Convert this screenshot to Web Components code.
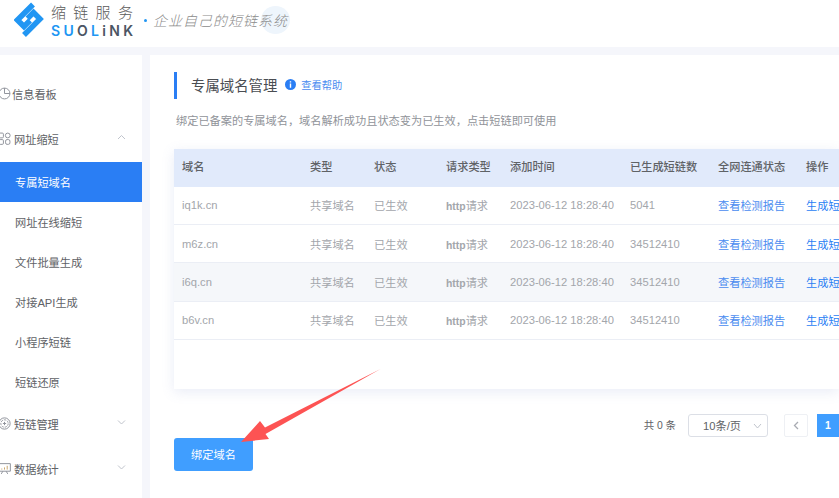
<!DOCTYPE html>
<html lang="zh">
<head>
<meta charset="utf-8">
<title>专属域名管理</title>
<style>
  html, body { margin: 0; padding: 0; }
  body {
    width: 839px; height: 498px; overflow: hidden;
    background: #f5f6fb;
    font-family: "Liberation Sans", "Noto Sans CJK SC", sans-serif;
    font-size: 11.2px;
  }
  #app { display: flex; flex-direction: column; height: 498px; }
  #content { display: flex; flex: 1; gap: 8px; padding-top: 8px; min-height: 0; }
</style>
</head>
<body>
<div id="app">
  <app-header></app-header>
  <div id="content">
    <side-nav>
      <nav-group label="信息看板" icon="clock" style="--tx:-2px"></nav-group>
      <nav-group label="网址缩短" icon="grid" chevron="up"></nav-group>
      <nav-item active>专属短域名</nav-item>
      <nav-item>网址在线缩短</nav-item>
      <nav-item>文件批量生成</nav-item>
      <nav-item>对接API生成</nav-item>
      <nav-item>小程序短链</nav-item>
      <nav-item>短链还原</nav-item>
      <nav-group label="短链管理" icon="badge" chevron="down"></nav-group>
      <nav-group label="数据统计" icon="chart" chevron="down"></nav-group>
    </side-nav>
    <domain-page>
      <domain-table></domain-table>
    </domain-page>
  </div>
</div>

<script>
const icons = {
  clock: '<circle cx="6" cy="6" r="5"/><path d="M6 1v5h5"/>',
  grid: '<rect x="1" y="1" width="4" height="4.4" rx="1"/><circle cx="9" cy="3.2" r="2.2"/><rect x="1" y="7" width="4" height="4.4" rx="1"/><rect x="7" y="7" width="4" height="4.4" rx="1.4"/>',
  badge: '<circle cx="6" cy="6" r="5.2"/><circle cx="6" cy="6" r="3.4" stroke-dasharray="2 1"/><path d="M4.5 6h3M6 4.5v3"/>',
  chart: '<path d="M.6 1.5h10.8v7H.6zM3 11l1.5-2.5M9 11 7.5 8.500"/><path d="M3.500 7V6M6 7V5M8.500 7V3.500" stroke="#c9a66b"/>'
};

class AppHeader extends HTMLElement {
  constructor() {
    super();
    this.attachShadow({ mode: 'open' }).innerHTML = `
      <style>
        :host { display: flex; align-items: center; height: 47px; flex: none; background: #fff; padding-left: 14px; box-sizing: border-box; }
        svg { flex: none; width: 30px; height: 36px; margin-top: -7px; }
        .brand { display: flex; flex-direction: column; margin-left: 7px; margin-top: -7px; width: 86px; }
        .cn { font: 300 15px/17px "Noto Sans CJK SC", sans-serif; letter-spacing: 7.300px; color: #5a5a5a; white-space: nowrap; }
        .en { font: 600 14px/13px Inter, "Liberation Sans", sans-serif; letter-spacing: 3.300px; color: #4b5563; white-space: nowrap; margin-top: 4px; }
        .en b { color: #2196f3; font-weight: 600; }
        .slogan { position: relative; display: flex; align-items: center; margin-left: 7px; margin-top: -7px; white-space: nowrap; }
        .dot { width: 3px; height: 3px; border-radius: 50%; background: #2196f3; margin-right: 6px; }
        .text { font: 300 14px/20px "Noto Sans CJK SC", sans-serif; font-style: italic; letter-spacing: 1px; color: #8b8b8b; position: relative; }
        .halo { position: absolute; left: 117px; top: -4px; width: 29px; height: 28px; border-radius: 50%; background: #eef5fc; }
      </style>
      <svg viewBox="0 0 30 36" fill="none" stroke="#2196f3" stroke-width="5.500">
        <path d="M19 2.500 3.500 18 10 24.500 16 18.500"/>
        <path d="M10 33 26 17 19.500 10.500 13.500 16.500"/>
      </svg>
      <div class="brand">
        <span class="cn">缩链服务</span>
        <span class="en"><b>SU</b>O<b>L</b>iNK</span>
      </div>
      <div class="slogan">
        <span class="dot"></span>
        <span class="halo"></span>
        <span class="text">企业自己的短链系统</span>
      </div>`;
  }
}

class SideNav extends HTMLElement {
  constructor() {
    super();
    this.attachShadow({ mode: 'open' }).innerHTML = `
      <style>
        :host { display: block; flex: none; width: 142px; background: #fff; padding-top: 17px; box-sizing: border-box; }
      </style>
      <slot></slot>`;
  }
}

class NavGroup extends HTMLElement {
  constructor() {
    super();
    const icon = icons[this.getAttribute('icon')] || '';
    const chevron = this.getAttribute('chevron');
    const chevronPath = chevron === 'up' ? 'M1 5 4.500 1.500 8 5' : 'M1 1.500 4.500 5 8 1.500';
    this.attachShadow({ mode: 'open' }).innerHTML = `
      <style>
        :host { display: flex; align-items: center; box-sizing: border-box; height: 45px; padding-bottom: 2px; color: #606266; font-size: 11.200px; position: relative; }
        .ico { width: 13px; height: 13px; margin-left: -2px; flex: none; fill: none; stroke: #8f929a; stroke-width: .9; }
        .label { margin-left: 3px; transform: translateX(var(--tx, 0)); }
        .chev { position: absolute; left: 117px; top: 17px; width: 9px; height: 6px; fill: none; stroke: #c0c4cc; stroke-width: 1; }
      </style>
      <svg class="ico" viewBox="0 0 12 12">${icon}</svg>
      <span class="label">${this.getAttribute('label')}</span>
      ${chevron ? `<svg class="chev" viewBox="0 0 9 6"><path d="${chevronPath}"/></svg>` : ''}`;
  }
}

class NavItem extends HTMLElement {
  constructor() {
    super();
    this.attachShadow({ mode: 'open' }).innerHTML = `
      <style>
        :host { display: flex; align-items: center; box-sizing: border-box; height: 40px; padding: 0 0 1px 15px; color: #606266; font-size: 11.200px; }
        :host([active]) { background: #2a7ef4; color: #fff; }
      </style>
      <slot></slot>`;
  }
}

class DomainPage extends HTMLElement {
  constructor() {
    super();
    this.attachShadow({ mode: 'open' }).innerHTML = `
      <style>
        :host { display: block; flex: 1; min-width: 0; position: relative; background: #fff; padding: 17px 0 0 24px; box-sizing: border-box; overflow: hidden; }
        .title { display: flex; align-items: center; box-sizing: border-box; height: 27px; border-left: 3px solid #2a7ef4; padding: 0 0 3px 14px; }
        h2 { margin: 0; font-size: 14.400px; font-weight: 400; color: #4a4d52; }
        .help { display: flex; align-items: center; gap: 5px; margin-left: 8px; color: #4a8cf0; font-size: 10.240px; }
        .help svg { width: 11px; height: 11px; }
        p { margin: 14px 0 0 2px; height: 17px; line-height: 17px; color: #909399; font-size: 11.200px; }
        .table { margin-top: 19px; }
        .pager { display: flex; align-items: center; justify-content: flex-end; margin-top: 25px; height: 23px; }
        .total { color: #606266; font-size: 10.400px; margin: 0 12px 2px 0; }
        .select { display: flex; align-items: center; box-sizing: border-box; width: 80px; height: 23px; border: 1px solid #dcdfe6; border-radius: 3px; padding: 0 0 1px 14px; color: #606266; font-size: 11.200px; position: relative; }
        .select svg { position: absolute; right: 5px; top: 8px; width: 9px; height: 6px; fill: none; stroke: #c0c4cc; }
        .prev { box-sizing: border-box; display: flex; align-items: center; justify-content: center; width: 24px; height: 23px; margin-left: 16px; border: 1px solid #eef0f4; border-radius: 2px; }
        .prev svg { width: 6px; height: 9px; fill: none; stroke: #a8abb2; stroke-width: 1.300; }
        .page { display: flex; align-items: center; justify-content: center; width: 22px; height: 23px; margin-left: 9px; background: #409eff; color: #fff; font-weight: 700; font-size: 10.400px; }
        button { display: block; margin: 1px 0 0; width: 79px; height: 33px; padding: 0 0 1px; border: 0; border-radius: 3px; background: #409eff; color: #fff; font: inherit; font-size: 11.200px; }
        .arrow { position: absolute; left: 0; top: 0; width: 689px; height: 443px; pointer-events: none; }
      </style>
      <div class="title">
        <h2>专属域名管理</h2>
        <span class="help">
          <svg viewBox="0 0 11 11"><circle cx="5.500" cy="5.500" r="5.500" fill="#2a7ef4"/><path d="M4.800 2.300h1.400v1.300H4.800zM4.800 4.600h1.400v4.100H4.800z" fill="#fff"/></svg>
          查看帮助
        </span>
      </div>
      <p>绑定已备案的专属域名，域名解析成功且状态变为已生效，点击短链即可使用</p>
      <div class="table"><slot></slot></div>
      <div class="pager">
        <span class="total">共 0 条</span>
        <div class="select">10条/页<svg viewBox="0 0 9 6"><path d="M1 1 4.500 5 8 1"/></svg></div>
        <div class="prev"><svg viewBox="0 0 6 9"><path d="M5 1 1.500 4.500 5 8"/></svg></div>
        <div class="page">1</div>
      </div>
      <button>绑定域名</button>
      <!-- arrow over the button, coordinates are relative to this panel -->
      <svg class="arrow" viewBox="0 0 689 443">
        <path d="M230.500 314 115 372.500 110 366 91 387 119 384 115.500 379z" fill="#fd5353"/>
      </svg>`;
  }
}

const columns = '128px 64px 72px 64px 120px 88px 88px 1fr';
const heads = ['域名', '类型', '状态', '请求类型', '添加时间', '已生成短链数', '全网连通状态', '操作'];
const domains = [
  ['iq1k.cn', '5041'],
  ['m6z.cn', '34512410'],
  ['i6q.cn', '34512410'],
  ['b6v.cn', '34512410']
];

class DomainTable extends HTMLElement {
  constructor() {
    super();
    const rows = domains.map((d, i) => `
      <div class="row${i === 2 ? ' alt' : ''}">
        <span>${d[0]}</span><span>共享域名</span><span>已生效</span><span class="proto"><b>http</b>请求</span>
        <span>2023-06-12 18:28:40</span><span>${d[1]}</span>
        <span class="link">查看检测报告</span><span class="act">生成短链</span>
      </div>`).join('');
    this.attachShadow({ mode: 'open' }).innerHTML = `
      <style>
        :host { display: block; height: 240px; background: #fff; box-shadow: 0 3px 12px rgba(120,135,200,.16); }
        .row, .head { display: grid; grid-template-columns: ${columns}; align-items: center; box-sizing: border-box; white-space: nowrap; overflow: hidden; }
        .row > span, .head > span { padding-left: 8px; }
        .head { height: 37.600px; padding-bottom: 3px; background: #e1eafb; color: #5f6266; font-weight: 500; font-size: 11.200px; }
        .row { height: 38.400px; color: #a3a6ab; font-size: 11.200px; border-bottom: 1px solid #ebeef5; }
        .alt { background: #f5f7fa; }
        .proto b { font-weight: 700; font-size: 10.400px; }
        .link { color: #4a8cf0; }
        .act { color: #2a7ef4; }
      </style>
      <div class="head">${heads.map(h => `<span>${h}</span>`).join('')}</div>
      ${rows}`;
  }
}

customElements.define('app-header', AppHeader);
customElements.define('side-nav', SideNav);
customElements.define('nav-group', NavGroup);
customElements.define('nav-item', NavItem);
customElements.define('domain-page', DomainPage);
customElements.define('domain-table', DomainTable);
</script>
</body>
</html>
